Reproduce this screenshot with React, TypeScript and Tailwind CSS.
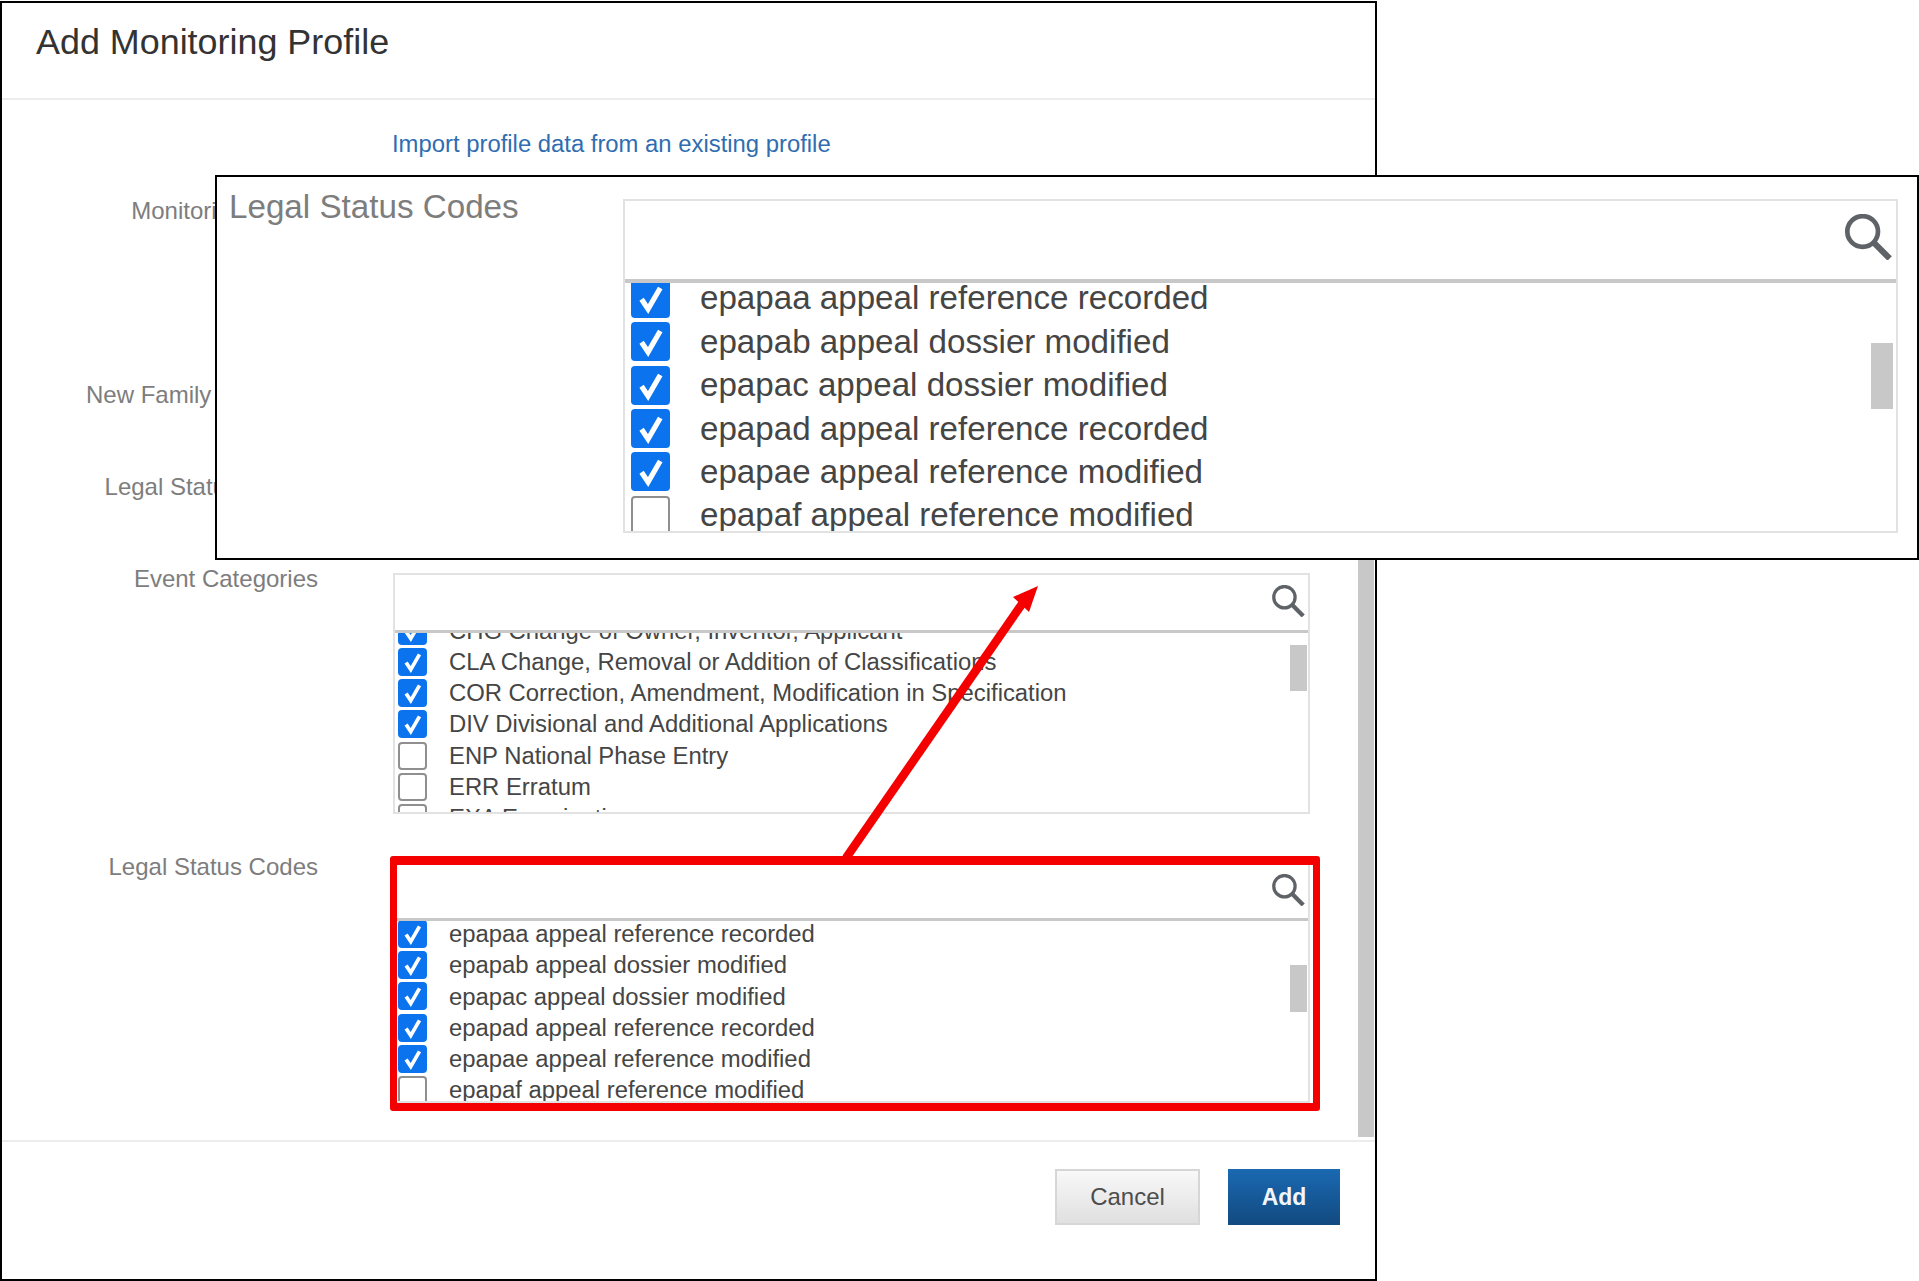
import * as React from "react";

type Row = { label: string; checked: boolean };

const eventRows: Row[] = [
  { label: "CHG Change of Owner, Inventor, Applicant", checked: true },
  { label: "CLA Change, Removal or Addition of Classifications", checked: true },
  { label: "COR Correction, Amendment, Modification in Specification", checked: true },
  { label: "DIV Divisional and Additional Applications", checked: true },
  { label: "ENP National Phase Entry", checked: false },
  { label: "ERR Erratum", checked: false },
  { label: "EXA Examination", checked: false },
];

const legalRows: Row[] = [
  { label: "epapaa appeal reference recorded", checked: true },
  { label: "epapab appeal dossier modified", checked: true },
  { label: "epapac appeal dossier modified", checked: true },
  { label: "epapad appeal reference recorded", checked: true },
  { label: "epapae appeal reference modified", checked: true },
  { label: "epapaf appeal reference modified", checked: false },
];

// class sets for the three boxes on the page
const eventBox = {
  box: "w-[917px] h-[241px] border-2 border-[#e2e2e2]",
  bar: "h-[58px] border-b-[3px] pr-[3px] pb-[4px]",
  icon: "w-[33px] h-[32px]",
  list: "pl-[3px]",
  first: "-mt-[17.8px]",
  row: "h-[31.2px] gap-[22px] text-[23.85px]",
  check: "w-[29px] h-[28px]",
  thumb: "top-[12px] right-[1.5px] w-[16.5px] h-[46px]",
};

const legalBox = {
  box: "w-full h-[238px] border-r-2 border-b-2 border-[#e2e2e2]",
  bar: "h-[56px] border-b-[3px] pr-[3px] pb-[4px]",
  icon: "w-[33px] h-[32px]",
  list: "pl-px",
  first: "-mt-[2.6px]",
  row: "h-[31.2px] gap-[22px] text-[23.85px]",
  check: "w-[29px] h-[28px]",
  thumb: "top-[44px] right-[1.5px] w-[16.5px] h-[47px]",
};

const popupBox = {
  box: "w-[1275px] h-[334px] border-2 border-[#e2e2e2]",
  bar: "h-[82px] border-b-4 pr-[4px] pb-[6px]",
  icon: "w-[47px] h-[46px]",
  list: "pl-[6px]",
  first: "-mt-[6.4px]",
  row: "h-[43.4px] gap-[30px] text-[33.15px]",
  check: "w-[39px] h-[39px]",
  thumb: "top-[60px] right-[3px] w-[22px] h-[66px]",
};

function SearchIcon({ className }: { className: string }) {
  return (
    <svg viewBox="2 1 32 31.5" className={className} fill="none" stroke="#5f6368">
      <circle cx="14" cy="13" r="10.5" strokeWidth="3.2" />
      <path d="M22 21 L32.5 31.5" strokeWidth="4.2" />
    </svg>
  );
}

function Checkbox({ checked, className }: { checked: boolean; className: string }) {
  if (!checked) {
    return <span className={`${className} shrink-0 rounded-[4px] border-2 border-[#8f8f8f] bg-white`} />;
  }
  return (
    <span className={`${className} shrink-0 rounded-[4px] bg-[#0b73ee]`}>
      <svg viewBox="0 0 24 24" className="h-full w-full" fill="none" stroke="white" strokeWidth="3.2">
        <path d="M6.5 12.5 L10.5 18.5 L18 5.5" />
      </svg>
    </span>
  );
}

function Picker({ rows, s }: { rows: Row[]; s: typeof eventBox }) {
  return (
    <div className={`${s.box} flex flex-col bg-white`}>
      <div className={`${s.bar} flex shrink-0 items-center justify-end border-[#c8c8c8]`}>
        <SearchIcon className={s.icon} />
      </div>
      <div className={`${s.list} relative min-h-0 flex-1 overflow-hidden`}>
        <div className={s.first}>
          {rows.map((row) => (
            <div key={row.label} className={`${s.row} flex items-center whitespace-nowrap text-[#454545]`}>
              <Checkbox checked={row.checked} className={s.check} />
              <span>{row.label}</span>
            </div>
          ))}
        </div>
        <div className={`${s.thumb} absolute bg-[#c8c8c8]`} />
      </div>
    </div>
  );
}

function FormRow({ label, className, children }: { label: string; className: string; children?: React.ReactNode }) {
  return (
    <div className={`${className} flex items-start`}>
      <div className="w-[316px] shrink-0 whitespace-nowrap text-right text-[24px] leading-[26px] text-[#7d7d7d]">{label}</div>
      <div className="ml-[75px]">{children}</div>
    </div>
  );
}

export default function App() {
  return (
    <div className="relative h-[1281px] w-[1919px] overflow-hidden bg-white pt-px font-['Liberation_Sans',Arial,sans-serif]">
      <div className="flex h-[1280px] w-[1377px] flex-col border-2 border-black bg-white">
        <div className="h-[97px] shrink-0 border-b-2 border-[#ececec] pl-[34px] pt-[18px] text-[35.9px] leading-[42px] text-[#333333]">
          Add Monitoring Profile
        </div>

        <div className="flex min-h-0 flex-1">
          <div className="flex-1 pt-[31px]">
            <div className="ml-[390px] text-[23.85px] leading-[26px] text-[#2f6db0]">Import profile data from an existing profile</div>
            <FormRow label="Monitoring Profile" className="mt-[41px]" />
            <FormRow label="New Family Members" className="mt-[158px]" />
            <FormRow label="Legal Status Events" className="mt-[66px]" />
            <FormRow label="Event Categories" className="mt-[66px]">
              <div className="pt-[7px]">
                <Picker rows={eventRows} s={eventBox} />
              </div>
            </FormRow>
            <FormRow label="Legal Status Codes" className="mt-[40px]">
              <div className="-ml-[3px] mt-[2px] h-[255px] w-[930px] rounded-[3px] border-x-[7px] border-b-8 border-t-[9px] border-[#f40000] bg-white pr-[3px]">
                <Picker rows={legalRows} s={legalBox} />
              </div>
            </FormRow>
          </div>
          <div className="mb-[3px] mr-px mt-[300px] w-[16px] bg-[#c8c8c8]" />
        </div>

        <div className="flex h-[139px] shrink-0 items-start justify-end gap-[28px] border-t-2 border-[#ececec] pr-[35px] pt-[27px]">
          <button className="flex h-[56px] w-[145px] items-center justify-center border-2 border-[#d6d6d6] bg-gradient-to-b from-[#f8f8f8] to-[#e0e0e0] text-[24px] text-[#4d4d4d]">
            Cancel
          </button>
          <button className="flex h-[56px] w-[112px] items-center justify-center bg-gradient-to-b from-[#1a69b2] to-[#124a80] text-[23px] font-bold text-[#f2f6fb]">
            Add
          </button>
        </div>
      </div>

      {/* zoomed callout over the form */}
      <div className="absolute left-[215px] top-[175px] flex h-[385px] w-[1704px] items-start border-2 border-black bg-white pl-[12px] pt-[22px]">
        <div className="-mt-[11px] w-[394px] shrink-0 text-[33.2px] leading-[38px] text-[#7d7d7d]">Legal Status Codes</div>
        <Picker rows={legalRows} s={popupBox} />
      </div>

      {/* red arrow from the highlighted box up to the callout */}
      <svg className="pointer-events-none absolute left-0 top-0 h-[1281px] w-[1919px]" viewBox="0 0 1919 1281" fill="#f40000">
        <path d="M846 858 L1022 604" stroke="#f40000" strokeWidth="8.5" />
        <polygon points="1038,586 1013,597 1029,612" />
      </svg>
    </div>
  );
}
